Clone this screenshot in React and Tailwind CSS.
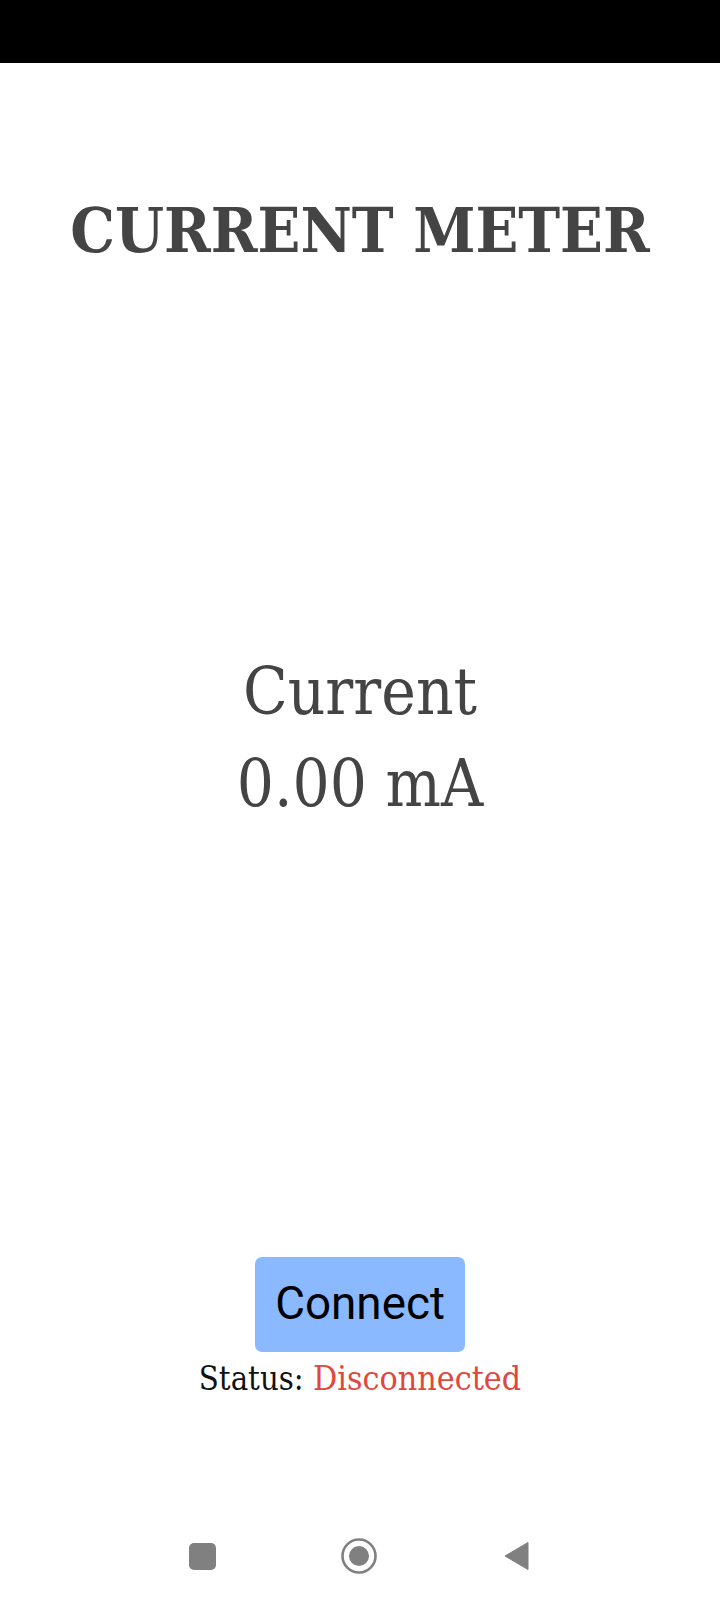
export default function App() {
  const serif = "font-['DejaVu_Serif_Condensed','DejaVu_Serif',serif]";
  return (
    <div className="w-[720px] h-[1600px] bg-white flex flex-col items-center overflow-hidden">
      <div className="w-full h-[63px] bg-black shrink-0" />
      <h1 className={`${serif} mt-[132px] h-[70px] leading-[70px] text-[62.5px] font-bold text-[#444444] whitespace-nowrap`}>CURRENT METER</h1>
      <div className={`${serif} mt-[381px] text-[65px] leading-[92px] text-[#444444] text-center`}>
        <div>Current</div>
        <div>0.00 mA</div>
      </div>
      <button className="mt-[427px] w-[210px] h-[95px] rounded-[7px] bg-[#8ab9ff] font-['Roboto',sans-serif] text-[45.8px] text-black">Connect</button>
      <div className={`${serif} mt-[7px] text-[32.6px] leading-[40px] text-[#111111] whitespace-nowrap`}>
        Status: <span className="text-[33.7px] text-[#e0483e]">Disconnected</span>
      </div>
      <div className="mt-[139px] pr-[2px] flex items-center">
        <svg width="27" height="27" viewBox="0 0 27 27"><rect width="27" height="27" rx="5" fill="#808080" /></svg>
        <svg className="ml-[125px]" width="36" height="36" viewBox="0 0 36 36"><circle cx="18" cy="18" r="16.5" fill="none" stroke="#808080" strokeWidth="2.6" /><circle cx="18" cy="18" r="10" fill="#808080" /></svg>
        <svg className="ml-[126.5px]" width="25" height="30" viewBox="0 0 25 30"><path d="M24 1.5 V28.5 L1 15 Z" fill="#808080" stroke="#808080" strokeWidth="1" strokeLinejoin="round" /></svg>
      </div>
    </div>
  );
}
